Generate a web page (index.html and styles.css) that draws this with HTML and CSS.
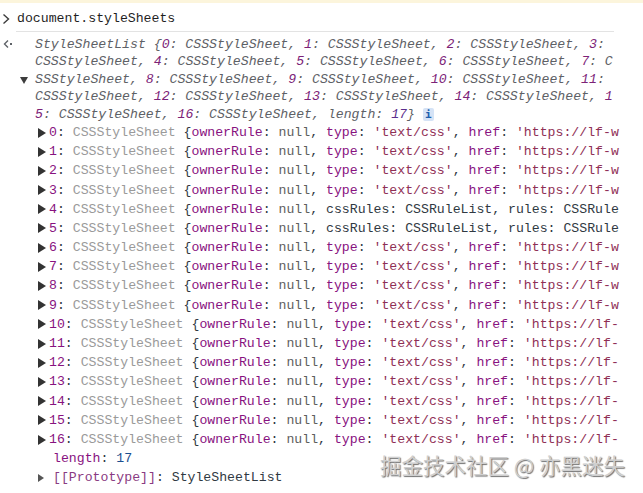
FILE: index.html
```html
<!DOCTYPE html>
<html>
<head>
<meta charset="utf-8">
<link rel="stylesheet" href="styles.css">
</head>
<body>
<div class="topbar"></div>
<div class="prompt">
  <div class="gutter-prompt">
    <svg width="10" height="12" viewBox="0 0 10 12"><path d="M2.5 1.5 L7.5 6 L2.5 10.5" fill="none" stroke="#3c3c3c" stroke-width="1.4"/></svg>
  </div>
  <div class="prompt-text">document.styleSheets</div>
</div>
<div class="result">
  <div class="pline"><span class="pg"><svg class="ret" width="12" height="10" viewBox="0 0 12 10"><path d="M6 1.5 L2.5 5 L6 8.5" fill="none" stroke="#5f6368" stroke-width="1.4"/><rect x="8" y="4" width="2" height="2" fill="#5f6368"/></svg></span><span class="pt"><span class="pc">StyleSheetList {</span><span class="pk">0</span><span class="pc">: CSSStyleSheet, </span><span class="pk">1</span><span class="pc">: CSSStyleSheet, </span><span class="pk">2</span><span class="pc">: CSSStyleSheet, </span><span class="pk">3</span><span class="pc">:</span></span></div>
  <div class="pline"><span class="pg"></span><span class="pt"><span class="pc">CSSStyleSheet, </span><span class="pk">4</span><span class="pc">: CSSStyleSheet, </span><span class="pk">5</span><span class="pc">: CSSStyleSheet, </span><span class="pk">6</span><span class="pc">: CSSStyleSheet, </span><span class="pk">7</span><span class="pc">: C</span></span></div>
  <div class="pline"><span class="pg"><span class="down"></span></span><span class="pt"><span class="pc">SSStyleSheet, </span><span class="pk">8</span><span class="pc">: CSSStyleSheet, </span><span class="pk">9</span><span class="pc">: CSSStyleSheet, </span><span class="pk">10</span><span class="pc">: CSSStyleSheet, </span><span class="pk">11</span><span class="pc">:</span></span></div>
  <div class="pline"><span class="pg"></span><span class="pt"><span class="pc">CSSStyleSheet, </span><span class="pk">12</span><span class="pc">: CSSStyleSheet, </span><span class="pk">13</span><span class="pc">: CSSStyleSheet, </span><span class="pk">14</span><span class="pc">: CSSStyleSheet, </span><span class="pk">1</span></span></div>
  <div class="pline"><span class="pg"></span><span class="pt"><span class="pk">5</span><span class="pc">: CSSStyleSheet, </span><span class="pk">16</span><span class="pc">: CSSStyleSheet, length: </span><span class="pn">17</span><span class="pc">}</span> <span class="info">i</span></span></div>
</div>
<div class="tree">
  <div class="row"><span class="tri"></span><span class="k">0</span><span class="d">: </span><span class="g">CSSStyleSheet </span><span class="d">{</span><span class="k">ownerRule</span><span class="d">: </span><span class="n">null</span><span class="d">, </span><span class="k">type</span><span class="d">: </span><span class="s">'text/css'</span><span class="d">, </span><span class="k">href</span><span class="d">: </span><span class="s">'https://lf-w</span></div>
  <div class="row"><span class="tri"></span><span class="k">1</span><span class="d">: </span><span class="g">CSSStyleSheet </span><span class="d">{</span><span class="k">ownerRule</span><span class="d">: </span><span class="n">null</span><span class="d">, </span><span class="k">type</span><span class="d">: </span><span class="s">'text/css'</span><span class="d">, </span><span class="k">href</span><span class="d">: </span><span class="s">'https://lf-w</span></div>
  <div class="row"><span class="tri"></span><span class="k">2</span><span class="d">: </span><span class="g">CSSStyleSheet </span><span class="d">{</span><span class="k">ownerRule</span><span class="d">: </span><span class="n">null</span><span class="d">, </span><span class="k">type</span><span class="d">: </span><span class="s">'text/css'</span><span class="d">, </span><span class="k">href</span><span class="d">: </span><span class="s">'https://lf-w</span></div>
  <div class="row"><span class="tri"></span><span class="k">3</span><span class="d">: </span><span class="g">CSSStyleSheet </span><span class="d">{</span><span class="k">ownerRule</span><span class="d">: </span><span class="n">null</span><span class="d">, </span><span class="k">type</span><span class="d">: </span><span class="s">'text/css'</span><span class="d">, </span><span class="k">href</span><span class="d">: </span><span class="s">'https://lf-w</span></div>
  <div class="row"><span class="tri"></span><span class="k">4</span><span class="d">: </span><span class="g">CSSStyleSheet </span><span class="d">{</span><span class="k">ownerRule</span><span class="d">: </span><span class="n">null</span><span class="d">, cssRules: CSSRuleList, rules: CSSRule</span></div>
  <div class="row"><span class="tri"></span><span class="k">5</span><span class="d">: </span><span class="g">CSSStyleSheet </span><span class="d">{</span><span class="k">ownerRule</span><span class="d">: </span><span class="n">null</span><span class="d">, cssRules: CSSRuleList, rules: CSSRule</span></div>
  <div class="row"><span class="tri"></span><span class="k">6</span><span class="d">: </span><span class="g">CSSStyleSheet </span><span class="d">{</span><span class="k">ownerRule</span><span class="d">: </span><span class="n">null</span><span class="d">, </span><span class="k">type</span><span class="d">: </span><span class="s">'text/css'</span><span class="d">, </span><span class="k">href</span><span class="d">: </span><span class="s">'https://lf-w</span></div>
  <div class="row"><span class="tri"></span><span class="k">7</span><span class="d">: </span><span class="g">CSSStyleSheet </span><span class="d">{</span><span class="k">ownerRule</span><span class="d">: </span><span class="n">null</span><span class="d">, </span><span class="k">type</span><span class="d">: </span><span class="s">'text/css'</span><span class="d">, </span><span class="k">href</span><span class="d">: </span><span class="s">'https://lf-w</span></div>
  <div class="row"><span class="tri"></span><span class="k">8</span><span class="d">: </span><span class="g">CSSStyleSheet </span><span class="d">{</span><span class="k">ownerRule</span><span class="d">: </span><span class="n">null</span><span class="d">, </span><span class="k">type</span><span class="d">: </span><span class="s">'text/css'</span><span class="d">, </span><span class="k">href</span><span class="d">: </span><span class="s">'https://lf-w</span></div>
  <div class="row"><span class="tri"></span><span class="k">9</span><span class="d">: </span><span class="g">CSSStyleSheet </span><span class="d">{</span><span class="k">ownerRule</span><span class="d">: </span><span class="n">null</span><span class="d">, </span><span class="k">type</span><span class="d">: </span><span class="s">'text/css'</span><span class="d">, </span><span class="k">href</span><span class="d">: </span><span class="s">'https://lf-w</span></div>
  <div class="row"><span class="tri"></span><span class="k">10</span><span class="d">: </span><span class="g">CSSStyleSheet </span><span class="d">{</span><span class="k">ownerRule</span><span class="d">: </span><span class="n">null</span><span class="d">, </span><span class="k">type</span><span class="d">: </span><span class="s">'text/css'</span><span class="d">, </span><span class="k">href</span><span class="d">: </span><span class="s">'https://lf-</span></div>
  <div class="row"><span class="tri"></span><span class="k">11</span><span class="d">: </span><span class="g">CSSStyleSheet </span><span class="d">{</span><span class="k">ownerRule</span><span class="d">: </span><span class="n">null</span><span class="d">, </span><span class="k">type</span><span class="d">: </span><span class="s">'text/css'</span><span class="d">, </span><span class="k">href</span><span class="d">: </span><span class="s">'https://lf-</span></div>
  <div class="row"><span class="tri"></span><span class="k">12</span><span class="d">: </span><span class="g">CSSStyleSheet </span><span class="d">{</span><span class="k">ownerRule</span><span class="d">: </span><span class="n">null</span><span class="d">, </span><span class="k">type</span><span class="d">: </span><span class="s">'text/css'</span><span class="d">, </span><span class="k">href</span><span class="d">: </span><span class="s">'https://lf-</span></div>
  <div class="row"><span class="tri"></span><span class="k">13</span><span class="d">: </span><span class="g">CSSStyleSheet </span><span class="d">{</span><span class="k">ownerRule</span><span class="d">: </span><span class="n">null</span><span class="d">, </span><span class="k">type</span><span class="d">: </span><span class="s">'text/css'</span><span class="d">, </span><span class="k">href</span><span class="d">: </span><span class="s">'https://lf-</span></div>
  <div class="row"><span class="tri"></span><span class="k">14</span><span class="d">: </span><span class="g">CSSStyleSheet </span><span class="d">{</span><span class="k">ownerRule</span><span class="d">: </span><span class="n">null</span><span class="d">, </span><span class="k">type</span><span class="d">: </span><span class="s">'text/css'</span><span class="d">, </span><span class="k">href</span><span class="d">: </span><span class="s">'https://lf-</span></div>
  <div class="row"><span class="tri"></span><span class="k">15</span><span class="d">: </span><span class="g">CSSStyleSheet </span><span class="d">{</span><span class="k">ownerRule</span><span class="d">: </span><span class="n">null</span><span class="d">, </span><span class="k">type</span><span class="d">: </span><span class="s">'text/css'</span><span class="d">, </span><span class="k">href</span><span class="d">: </span><span class="s">'https://lf-</span></div>
  <div class="row"><span class="tri"></span><span class="k">16</span><span class="d">: </span><span class="g">CSSStyleSheet </span><span class="d">{</span><span class="k">ownerRule</span><span class="d">: </span><span class="n">null</span><span class="d">, </span><span class="k">type</span><span class="d">: </span><span class="s">'text/css'</span><span class="d">, </span><span class="k">href</span><span class="d">: </span><span class="s">'https://lf-</span></div>
  <div class="row row-plain"><span class="k">length</span><span class="d">: </span><span class="num">17</span></div>
  <div class="row row-proto"><span class="tri-s"></span><span class="k2">[[Prototype]]</span><span class="d">: StyleSheetList</span></div>
</div>
<div class="watermark">掘金技术社区 @ 亦黑迷失</div>
</body>
</html>
```
FILE: styles.css
```css
html, body {
  margin: 0;
  padding: 0;
  background: #ffffff;
}
body {
  width: 643px;
  height: 493px;
  overflow: hidden;
  position: relative;
  font-family: "Liberation Mono", "DejaVu Sans Mono", monospace;
  font-size: 13.2px;
  color: #303942;
}
.topbar {
  height: 3px;
  background: #fcf5dc;
}
.prompt {
  display: flex;
  margin-right: 29px;
}
.gutter-prompt {
  width: 16px;
  display: flex;
  align-items: center;
  padding-left: 1px;
  box-sizing: border-box;
  padding-top: 2px;
}
.prompt-text {
  flex: 1;
  padding: 6px 0 3px 1px;
  line-height: 19px;
  border-bottom: 1px solid #e3e3e3;
  color: #1f1f1f;
}
.result {
  padding-top: 4px;
}
.pline {
  display: flex;
  height: 17.4px;
  line-height: 17.4px;
  white-space: pre;
}
.pg {
  width: 35px;
  flex: none;
  position: relative;
  display: flex;
  align-items: center;
}
.ret {
  margin-left: 2px;
  margin-top: -2px;
}
.down {
  width: 0;
  height: 0;
  margin-left: 20px;
  margin-top: 2px;
  border-left: 4.5px solid transparent;
  border-right: 4.5px solid transparent;
  border-top: 7px solid #3c3c3c;
}
.pt {
  font-style: italic;
}
.pc {
  color: #5e6166;
}
.pk {
  color: #7c2277;
}
.pn {
  color: #5a2d8c;
}
.info {
  display: inline-block;
  font-style: normal;
  background: #d5e3f6;
  color: #1d5fae;
  border-radius: 2px;
  width: 11px;
  height: 13px;
  line-height: 13px;
  text-align: center;
  font-size: 11px;
  font-family: "DejaVu Sans Mono", monospace;
  font-weight: bold;
  vertical-align: 0px;
}
.tree {
  margin-right: 23px;
}
.row {
  height: 19.2px;
  line-height: 19.2px;
  white-space: pre;
  overflow: hidden;
  display: flex;
  align-items: center;
  padding-left: 38px;
}
.tri {
  flex: none;
  width: 0;
  height: 0;
  border-top: 5px solid transparent;
  border-bottom: 5px solid transparent;
  border-left: 8px solid #333333;
  margin-right: 3px;
}
.tri-s {
  flex: none;
  width: 0;
  height: 0;
  border-top: 4.5px solid transparent;
  border-bottom: 4.5px solid transparent;
  border-left: 6px solid #555555;
  margin-right: 9px;
  margin-left: 0;
}
.row-plain {
  padding-left: 53px;
}
.k {
  color: #881280;
}
.k2 {
  color: #8a3a82;
}
.d {
  color: #303942;
}
.g {
  color: #9a9a9a;
}
.n {
  color: #5e5e5e;
}
.s {
  color: #8f2f55;
}
.num {
  color: #1c4f8f;
}
.watermark {
  position: absolute;
  left: 380px;
  top: 451px;
  font-family: "Noto Sans CJK SC", sans-serif;
  font-size: 21.5px;
  line-height: 28px;
  color: #cfcfcf;
  text-shadow: 1px 1px 1px #6f6f6f;
  white-space: nowrap;
}
```
